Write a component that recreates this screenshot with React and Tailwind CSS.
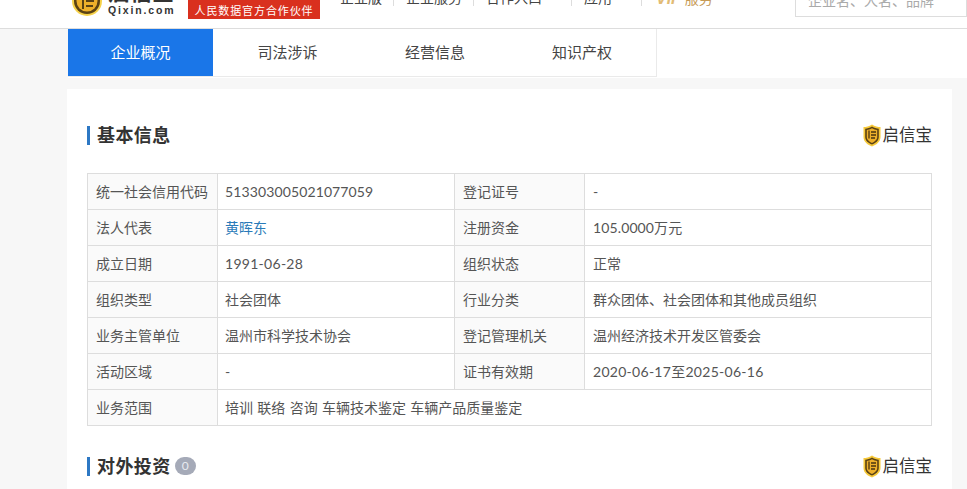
const Code = ({ children }) => <span className="tracking-[0.12px]">{children}</span>;
const Day = ({ children }) => <span className="tracking-[0.28px]">{children}</span>;

const rows = [
  ["统一社会信用代码", <Code>513303005021077059</Code>, "登记证号", "-"],
  ["法人代表", <span className="text-[#2a7ab8]">黄晖东</span>, "注册资金", <Code>105.0000万元</Code>],
  ["成立日期", <Day>1991-06-28</Day>, "组织状态", "正常"],
  ["组织类型", "社会团体", "行业分类", "群众团体、社会团体和其他成员组织"],
  ["业务主管单位", "温州市科学技术协会", "登记管理机关", "温州经济技术开发区管委会"],
  ["活动区域", "-", "证书有效期", <Day>2020-06-17至2025-06-16</Day>],
];

const ShieldMark = () => (
  <svg width="18" height="23" viewBox="0 0 18 23" className="shrink-0">
    <path d="M9 0.5 C12 2.5 15 3 17.5 3 V13 C17.5 18 13 21 9 22.5 C5 21 0.5 18 0.5 13 V3 C3 3 6 2.5 9 0.5 Z" fill="#f7c93a" />
    <path d="M9 2.5 C11.5 4 13.5 4.6 15.8 4.7 V13 C15.8 16.8 12.5 19.2 9 20.6 C5.5 19.2 2.2 16.8 2.2 13 V4.7 C4.5 4.6 6.5 4 9 2.5 Z" fill="#5a4214" />
    <path d="M3.8 6 C5.5 5.8 7 5.3 9 4.3 C11 5.3 12.5 5.8 14.2 6 V13 C14.2 15.8 11.5 17.8 9 18.9 C6.5 17.8 3.8 15.8 3.8 13 Z" fill="#eeb02a" />
    <path d="M6 6.5 V14.5 M8 8 H13 M8 11 H13 M8 14 H12" stroke="#4a3410" strokeWidth="1.3" fill="none" />
  </svg>
);

const Brand = () => (
  <div className="flex items-center gap-0.5">
    <ShieldMark />
    <span className="text-[16.5px] leading-6 text-[#333]">启信宝</span>
  </div>
);

const SectionTitle = ({ title, count }) => (
  <div className="flex items-center justify-between">
    <div className="flex items-center">
      <span className="h-[19px] w-[3px] bg-[#2d78c4]" />
      <h2 className="ml-[7px] text-[18px] leading-6 font-bold tracking-[0.4px] text-[#333]">{title}</h2>
      {count !== undefined && (
        <span className="ml-1 flex h-[18px] w-[21px] items-center justify-center rounded-full bg-[#a5aab8] text-xs text-[#e8eaf0]">
          {count}
        </span>
      )}
    </div>
    <Brand />
  </div>
);

const Caret = () => (
  <span className="inline-flex w-[18px] justify-end pr-0.5 text-[#bbb]">
    <svg width="8" height="5" viewBox="0 0 8 5">
      <path d="M1 1 L4 4 L7 1" stroke="currentColor" fill="none" />
    </svg>
  </span>
);

const NavItem = ({ children }) => (
  <span className="flex h-4 items-center border-r border-[#ddd] pr-[11px] pl-3 text-sm leading-4 text-[#444]">{children}</span>
);

export default function App() {
  return (
    <div className="h-[489px] overflow-hidden bg-[#f7f7f7] font-['Lato','Noto_Sans_CJK_SC',sans-serif]">
      <header className="flex h-[29px] items-end overflow-hidden border-b border-[#ddd] bg-white pl-[72px]">
        <svg width="30" height="30" viewBox="0 0 30 30" className="mb-[12px] shrink-0">
          <circle cx="15" cy="15" r="15" fill="#f6d24a" />
          <circle cx="15" cy="15" r="13" fill="#5a4214" />
          <circle cx="15" cy="15" r="10.5" fill="#eeb02a" />
          <path d="M11 7 V23 M14 9 H22 M14 15 H22 M14 20 H21" stroke="#5a4214" strokeWidth="2" fill="none" />
        </svg>
        <div className="mb-[12px] ml-1.5 flex w-[68px] flex-col">
          <span className="text-[22px] leading-5 font-bold text-[#333]">启信宝</span>
          <span className="mt-0.5 font-['Liberation_Sans',sans-serif] text-[10.5px] leading-3 font-bold tracking-[1.85px] text-[#333]">Qixin.com</span>
        </div>
        <span className="mb-[9px] ml-3 flex h-[22px] w-[132px] items-end justify-center bg-[#d9301e] text-[11px] leading-4 tracking-[0.9px] text-white">
          人民数据官方合作伙伴
        </span>
        <nav className="mb-[22px] ml-2 flex items-end">
          <NavItem>企业版</NavItem>
          <NavItem>企业服务</NavItem>
          <NavItem>合作入口<Caret /></NavItem>
          <NavItem>应用<Caret /></NavItem>
          <span className="-mb-px ml-3.5 flex items-end text-sm leading-4 text-[#c69a56]">
            <b className="mr-[3px] font-['Liberation_Sans',sans-serif] text-[16px] italic text-[#e2bb74]">VIP</b>服务
          </span>
        </nav>
        <div className="mb-[11px] ml-auto flex h-[32px] w-[172px] items-center border border-[#ddd] pl-3 text-sm text-[#aaa]">
          企业名、人名、品牌
        </div>
      </header>

      <div className="flex h-[49px] bg-white">
        <div className="h-full w-[68px] bg-[#f7f7f7]" />
        <div className="flex h-[48px] w-[589px] border-r border-b border-[#eaeaea] bg-white text-[15px] text-[#444]">
          <a className="flex w-[145px] items-center justify-center bg-[#1a76e8] text-white">企业概况</a>
          <a className="flex w-[149px] items-center justify-center">司法涉诉</a>
          <a className="flex w-[146px] items-center justify-center">经营信息</a>
          <a className="flex w-[148px] items-center justify-center">知识产权</a>
        </div>
      </div>

      <main className="mt-[11px] ml-[67px] w-[885px] bg-white px-5 pt-[34px] pb-10">
        <SectionTitle title="基本信息" />
        <table className="mt-[26px] w-[845px] table-fixed border-collapse text-sm text-[#555]">
          <colgroup>
            <col className="w-[130px]" />
            <col className="w-[237px]" />
            <col className="w-[130px]" />
            <col />
          </colgroup>
          <tbody>
            {rows.map((r) => (
              <tr key={r[0]} className="h-9">
                <td className="border border-[#ddd] bg-[#fafafa] px-2 whitespace-nowrap">{r[0]}</td>
                <td className="border border-[#ddd] pl-[7px]">{r[1]}</td>
                <td className="border border-[#ddd] bg-[#fafafa] px-2">{r[2]}</td>
                <td className="border border-[#ddd] px-2">{r[3]}</td>
              </tr>
            ))}
            <tr className="h-9">
              <td className="border border-[#ddd] bg-[#fafafa] px-2">业务范围</td>
              <td colSpan={3} className="border border-[#ddd] pl-[7px] [word-spacing:0.75px]">培训 联络 咨询 车辆技术鉴定 车辆产品质量鉴定</td>
            </tr>
          </tbody>
        </table>
        <div className="mt-7">
          <SectionTitle title="对外投资" count={0} />
        </div>
      </main>
    </div>
  );
}
